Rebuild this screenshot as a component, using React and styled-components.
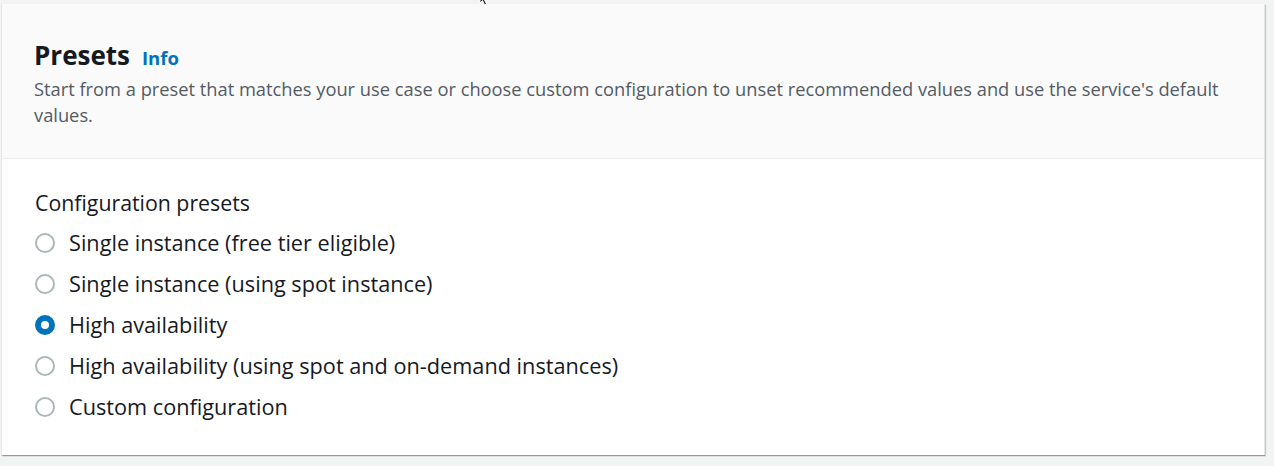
import React, { useState } from 'react'
import styled, { createGlobalStyle } from 'styled-components'

const Global = createGlobalStyle`
  html, body {
    margin: 0;
    padding: 0;
    background: #f2f3f3;
    font-family: "Open Sans", "Noto Sans", Arial, sans-serif;
  }
`

const Page = styled.div`
  padding: 4px 9px 10px 2px;
  position: relative;
`

const Card = styled.div`
  background: #fff;
  border-right: 1px solid #e4e6e6;
  box-shadow: 0 1px 1px 0 rgba(0, 28, 36, 0.3), 1px 1px 1px 0 rgba(0, 28, 36, 0.15);
`

const Header = styled.div`
  background: #fafafa;
  border-bottom: 1px solid #eaeded;
  padding: 35px 40px 30px 32px;
`

const TitleRow = styled.div`
  display: flex;
  align-items: baseline;
  gap: 12px;
`

const Title = styled.h2`
  margin: 0;
  font-size: 26px;
  font-weight: 700;
  color: #16191f;
  line-height: 32px;
`

const InfoLink = styled.a`
  font-size: 18.5px;
  font-weight: 700;
  color: #0073bb;
  text-decoration: none;
`

const Description = styled.p`
  margin: 5px 0 0;
  font-size: 18.3px;
  line-height: 26px;
  color: #545b64;
`

const Body = styled.div`
  padding: 30px 32px 28px 33px;
`

const Label = styled.div`
  font-size: 21.3px;
  color: #16191f;
  line-height: 28px;
  margin-bottom: 5px;
`

const RadioList = styled.div`
  display: flex;
  flex-direction: column;
`

const Option = styled.label`
  display: flex;
  align-items: center;
  gap: 14px;
  height: 41px;
  font-size: 21.7px;
  color: #16191f;
  cursor: pointer;
`

const Dot = styled.span`
  width: 20px;
  height: 20px;
  box-sizing: border-box;
  border-radius: 50%;
  border: ${p => (p.$checked ? '6px solid #0073bb' : '2px solid #aab7b8')};
  background: #fff;
  flex-shrink: 0;
`

const Cursor = styled.svg`
  position: absolute;
  left: 478px;
  top: -6px;
`

const presets = [
  'Single instance (free tier eligible)',
  'Single instance (using spot instance)',
  'High availability',
  'High availability (using spot and on-demand instances)',
  'Custom configuration',
]

export default function App() {
  const [selected, setSelected] = useState(2)

  return (
    <Page>
      <Global />
      <Card>
        <Header>
          <TitleRow>
            <Title>Presets</Title>
            <InfoLink href="#">Info</InfoLink>
          </TitleRow>
          <Description>
            Start from a preset that matches your use case or choose custom configuration to unset recommended values and use the service's default values.
          </Description>
        </Header>
        <Body>
          <Label>Configuration presets</Label>
          <RadioList>
            {presets.map((p, i) => (
              <Option key={p} onClick={() => setSelected(i)}>
                <Dot $checked={selected === i} />
                {p}
              </Option>
            ))}
          </RadioList>
        </Body>
      </Card>
      <Cursor width="16" height="14" viewBox="0 0 16 14">
        <path d="M2 0 L2 9 L4.5 6.5 L6.5 11 L8.5 10 L6.5 5.8 L10 5.8 Z" fill="#222" stroke="#fff" strokeWidth="1" />
      </Cursor>
    </Page>
  )
}
